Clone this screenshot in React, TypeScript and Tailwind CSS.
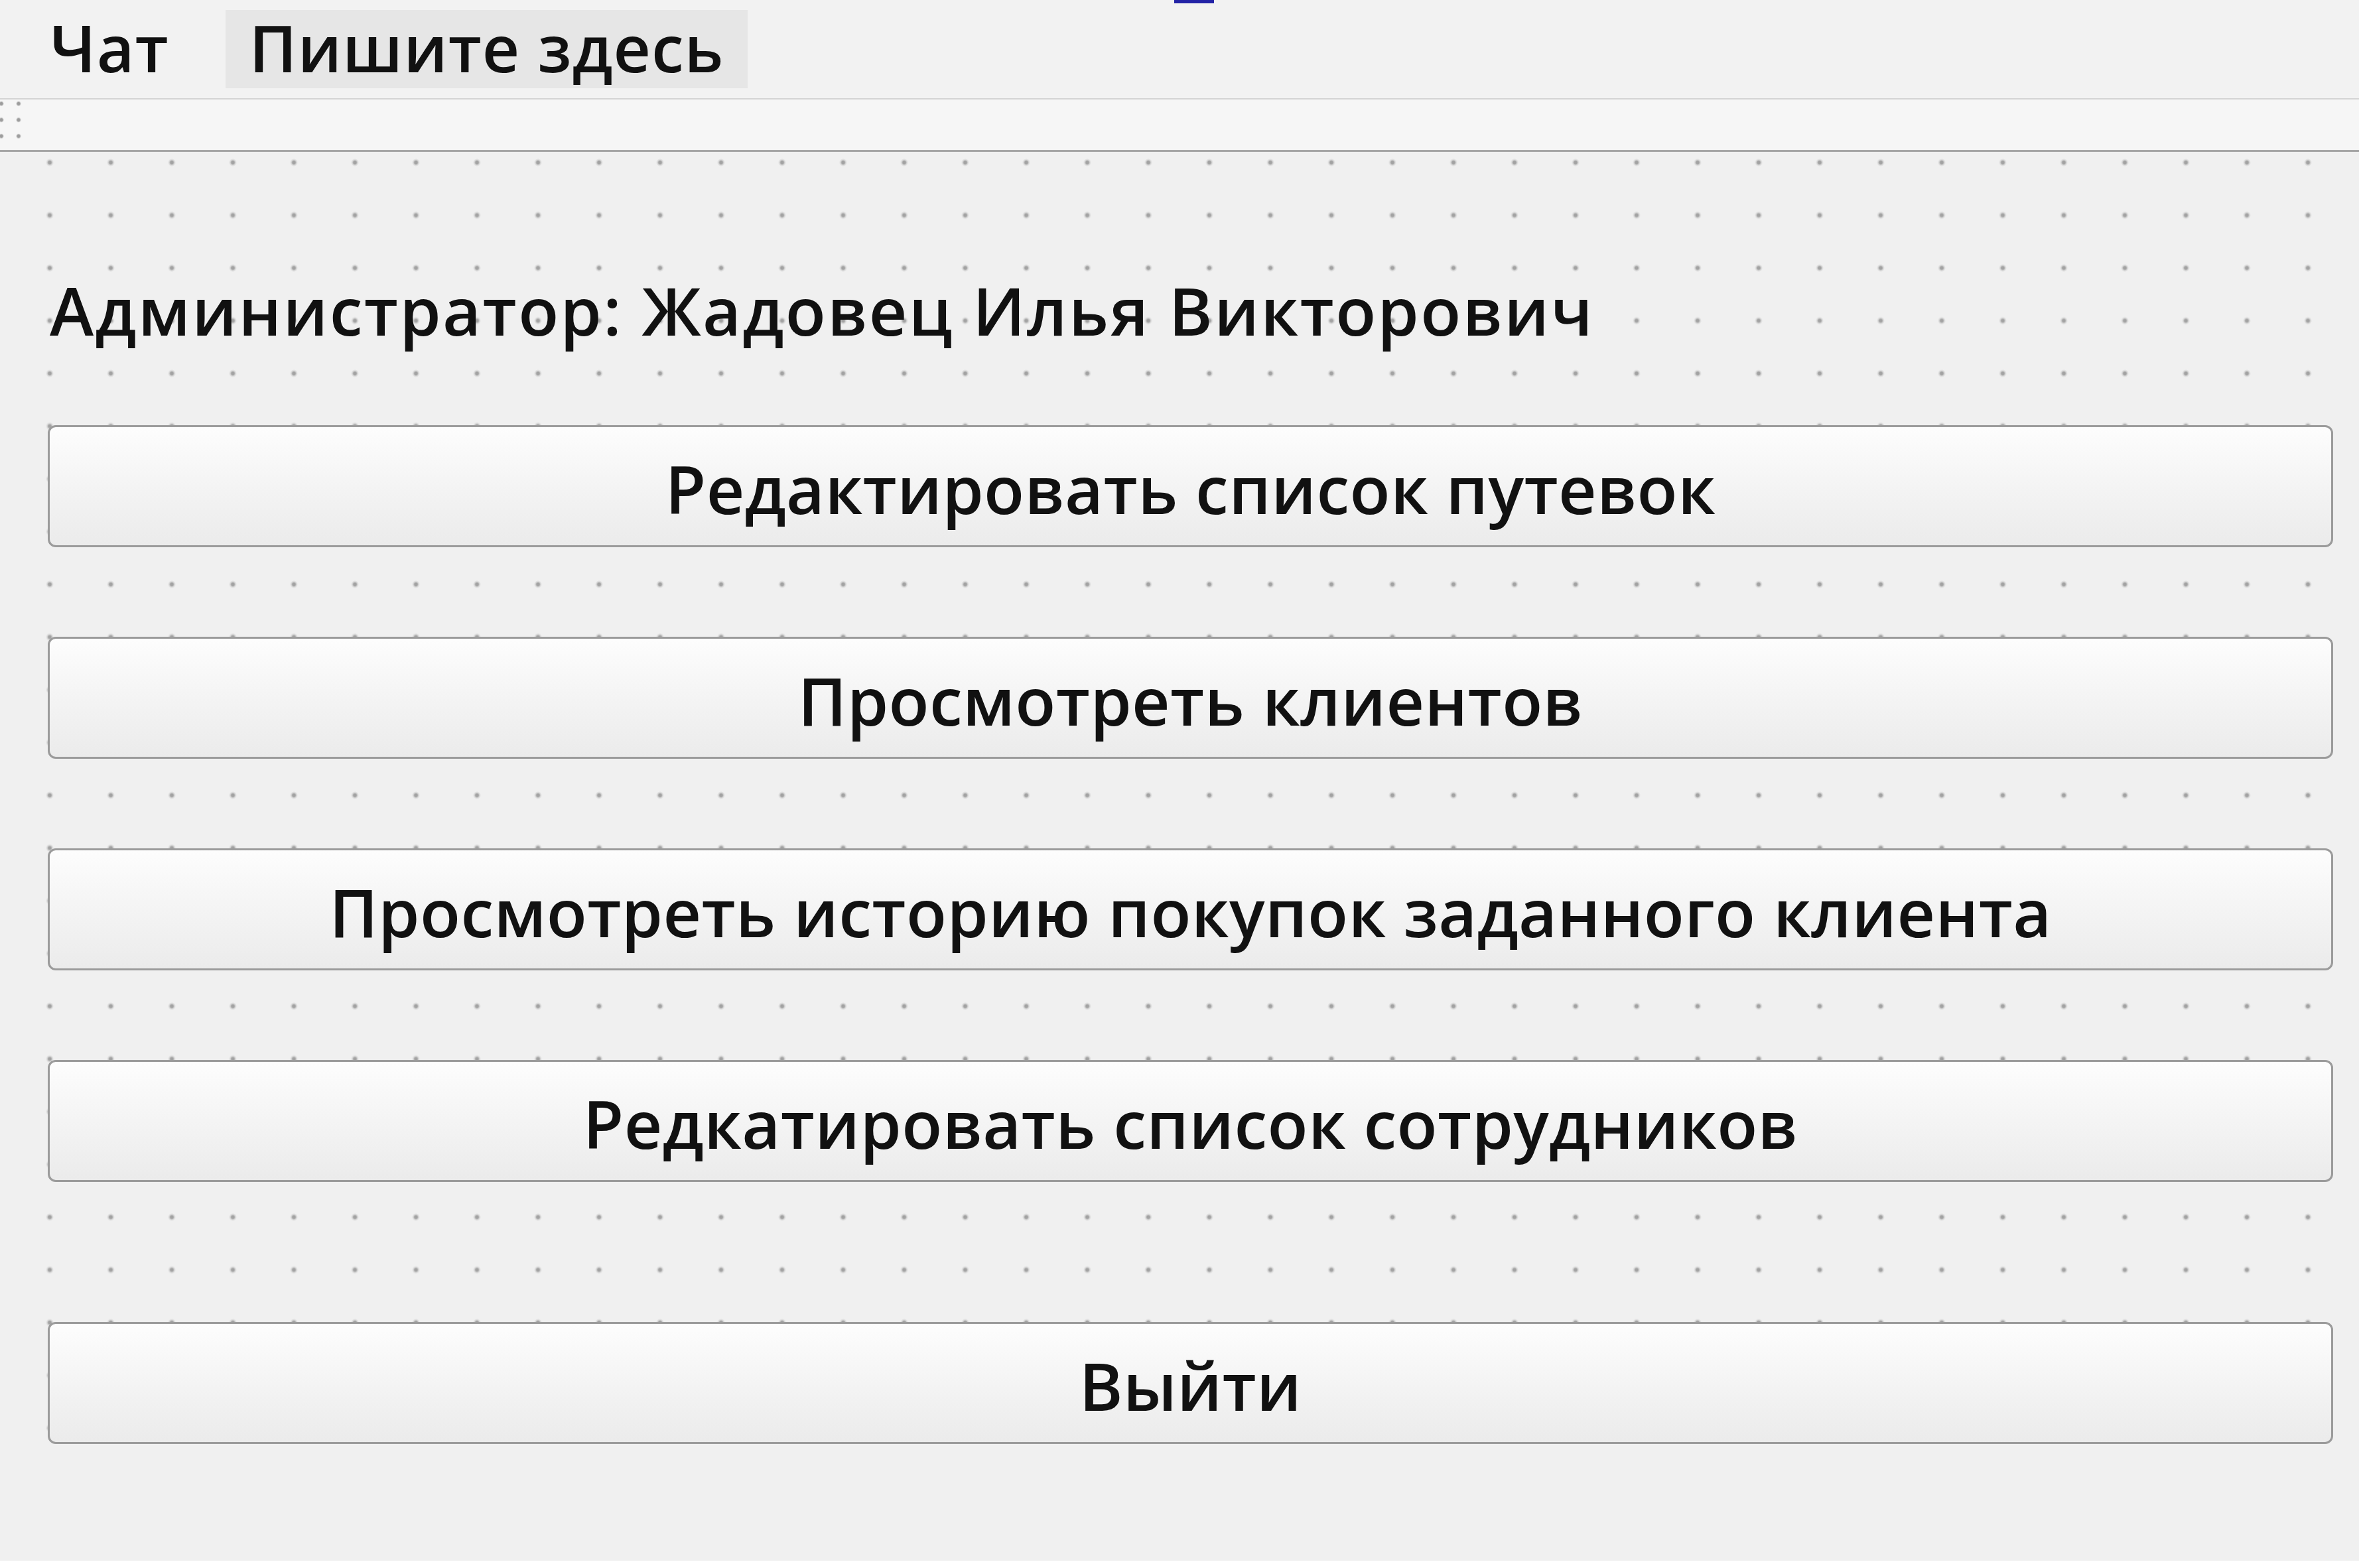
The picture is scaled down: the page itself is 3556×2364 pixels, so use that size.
import React from 'react';

const buttons = [
  'Редактировать список путевок',
  'Просмотреть клиентов',
  'Просмотреть историю покупок заданного клиента',
  'Редкатировать список сотрудников',
];

function FormButton({ label, className }: { label: string; className?: string }) {
  return (
    <button
      type="button"
      className={
        'flex h-[184px] w-full items-center justify-center rounded-[12px] border-[3px] border-[#9b9b9b] ' +
        'bg-gradient-to-b from-[#fdfdfd] via-[#f4f4f4] to-[#ebebeb] text-[100px] font-semibold leading-none text-[#111] ' +
        (className ?? '')
      }
    >
      <span className="mt-[6px] tracking-[0.4px]">{label}</span>
    </button>
  );
}

export default function App() {
  return (
    <div
      className="flex h-[2364px] w-[3556px] flex-col overflow-hidden bg-[#f0f0f0] text-[#111]"
      style={{ fontFamily: '"Open Sans", "Noto Sans", sans-serif' }}
    >
      {/* menu bar */}
      <div className="relative flex h-[150px] shrink-0 items-center border-b-2 border-[#d4d4d4] bg-[#f2f2f2] pl-[75px] text-[98px] font-semibold leading-none">
        <div className="absolute left-[1770px] top-0 h-[5px] w-[60px] bg-[#2323a6]" />
        <span className="-mt-[6px] w-[265px] tracking-[1px]">Чат</span>
        <div className="flex h-[118px] w-[787px] items-center justify-center bg-[#e6e6e6]">
          <span className="-mt-[6px] tracking-[1px]">Пишите здесь</span>
        </div>
      </div>

      {/* toolbar */}
      <div className="flex h-[79px] shrink-0 border-b-[3px] border-[#a6a6a6] bg-[#f6f6f6]">
        <div className="h-[64px] w-[34px] bg-[radial-gradient(circle,#9c9c9c_0,#9c9c9c_2px,transparent_4px)] bg-size-[26px_24.5px] bg-position-[-11px_-6px]" />
      </div>

      {/* designer grid area */}
      <div className="flex shrink-0 flex-col bg-[radial-gradient(circle,#a2a2a2_0,#a2a2a2_2px,rgba(162,162,162,0.3)_4px,transparent_6px)] bg-size-[92px_79.5px] bg-position-[29px_-23.75px] pb-[10px] pl-[72px] pr-[39px]">
        <div className="mt-[188px] flex h-[100px] items-center text-[100px] font-semibold leading-none">
          <span className="ml-[3px] tracking-[2.4px]">Администратор: Жадовец Илья Викторович</span>
        </div>
        <div className="mt-[124px] flex flex-col gap-[135px]">
          {buttons.map((b) => (
            <FormButton key={b} label={b} />
          ))}
        </div>
        <FormButton label="Выйти" className="mt-[211px]" />
      </div>

      <div className="flex-1" />
      <div className="h-[11px] shrink-0 bg-white" />
    </div>
  );
}
